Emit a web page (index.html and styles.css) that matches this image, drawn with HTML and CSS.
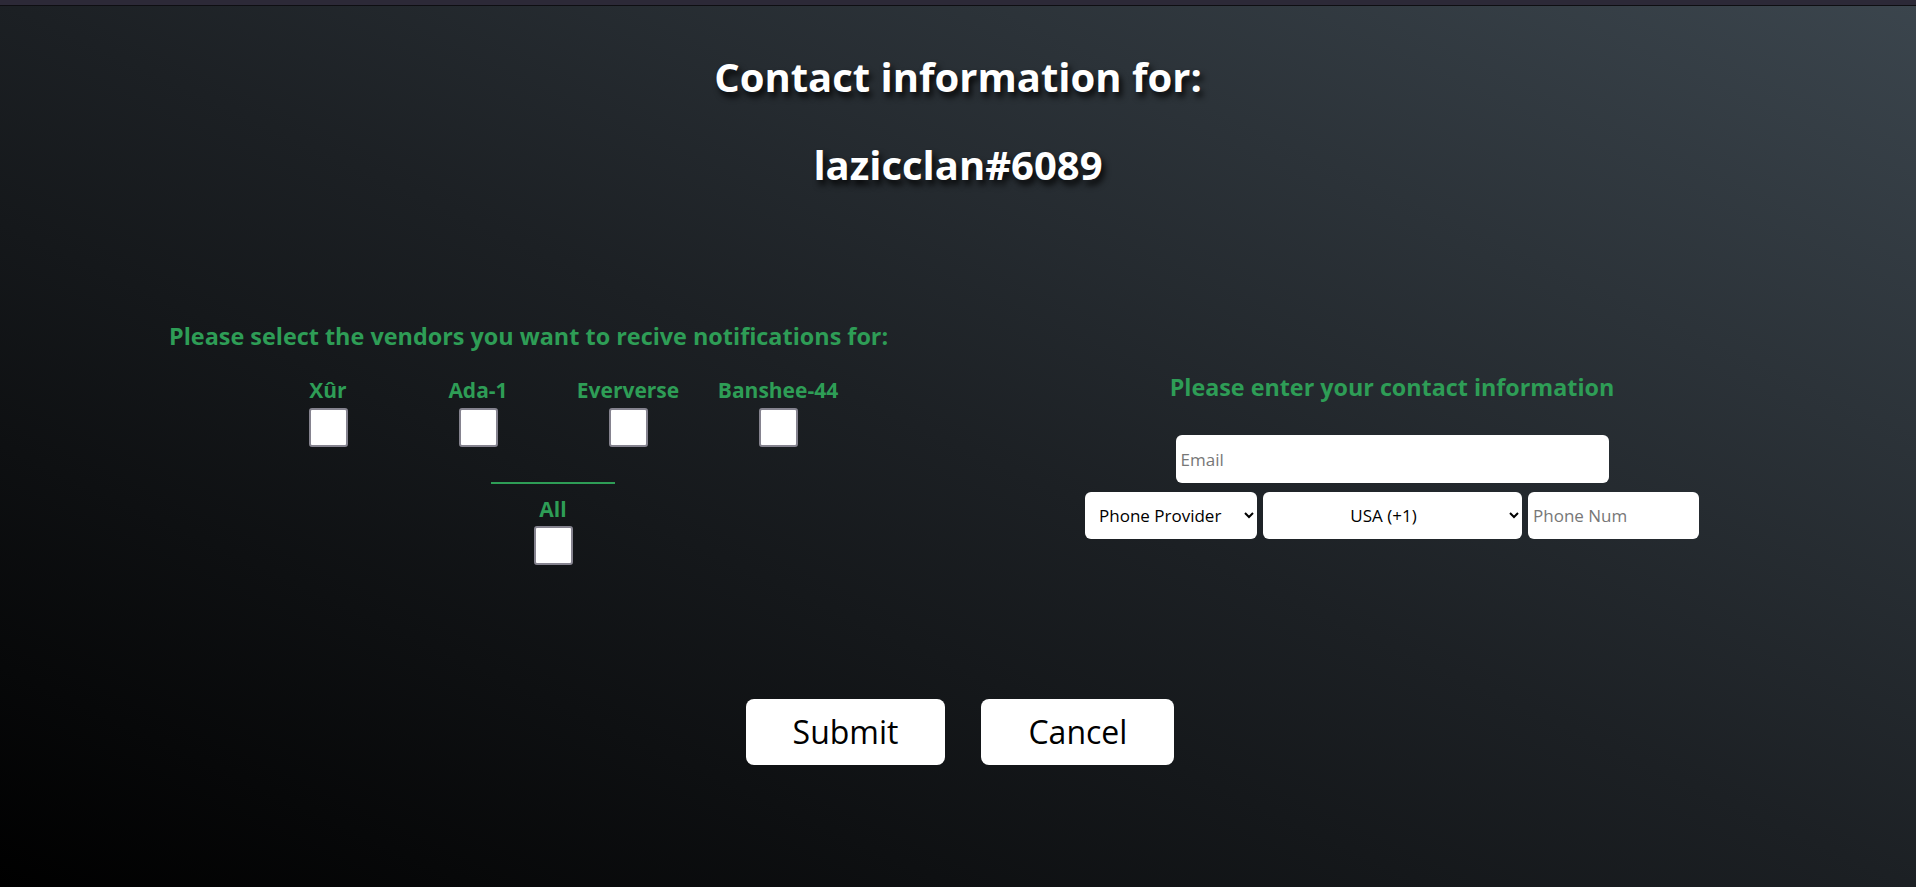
FILE: index.html
```html
<!DOCTYPE html>
<html>
<head>
<meta charset="utf-8">
<title>Contact information</title>
<link rel="stylesheet" href="styles.css">
</head>
<body>
<div class="topbar"></div>
<main class="page">
  <h1 class="title">Contact information for:</h1>
  <h2 class="title user">lazicclan#6089</h2>
  <section class="content">
    <div class="vendors-col">
      <p class="label">Please select the vendors you want to recive notifications for:</p>
      <div class="vendors">
        <label class="vendor"><span>Xûr</span><input type="checkbox" class="box"></label>
        <label class="vendor"><span>Ada-1</span><input type="checkbox" class="box"></label>
        <label class="vendor"><span>Eververse</span><input type="checkbox" class="box"></label>
        <label class="vendor"><span>Banshee-44</span><input type="checkbox" class="box"></label>
      </div>
      <div class="all-wrap">
        <div class="divider"></div>
        <label class="vendor all"><span>All</span><input type="checkbox" class="box"></label>
      </div>
    </div>
    <div class="contact-col">
      <p class="label contact-label">Please enter your contact information</p>
      <input class="field email" type="text" placeholder="Email">
      <div class="phone-row">
        <select class="field provider"><option>Phone Provider</option></select>
        <select class="field country"><option>USA (+1)</option></select>
        <input class="field phone" type="text" placeholder="Phone Num">
      </div>
    </div>
  </section>
  <div class="actions">
    <button class="btn submit">Submit</button>
    <button class="btn cancel">Cancel</button>
  </div>
</main>
</body>
</html>
```

FILE: styles.css
```css
html, body {
  margin: 0;
  padding: 0;
  height: 100%;
}
body {
  font-family: "Open Sans", "Liberation Sans", sans-serif;
  background: linear-gradient(to top right, #000000 0%, #1c2024 50%, #3b454d 100%);
  overflow: hidden;
}
.topbar {
  height: 5px;
  background: #2c2937;
  border-bottom: 1px solid #0e0e12;
}
.page {
  display: flex;
  flex-direction: column;
}
.title {
  margin: 0;
  text-align: center;
  color: #ffffff;
  font-weight: 700;
  font-size: 40px;
  line-height: 54px;
  text-shadow: 3px 5px 6px rgba(0, 0, 0, 0.85);
}
h1.title {
  margin-top: 44px;
}
.user {
  margin-top: 34px;
}
.content {
  display: flex;
  margin-top: 128px;
}
.vendors-col {
  width: 719px;
  padding-left: 169px;
  flex: none;
}
.label {
  margin: 0;
  color: #2e9d56;
  font-weight: 700;
  font-size: 23.4px;
  line-height: 32px;
  white-space: nowrap;
}
.vendors {
  display: grid;
  grid-template-columns: repeat(4, 150px);
  margin-left: 84px;
  margin-top: 25px;
}
.vendor {
  display: flex;
  flex-direction: column;
  align-items: center;
  color: #2e9d56;
  font-weight: 700;
  font-size: 21px;
  line-height: 27px;
}
.box {
  appearance: none;
  -webkit-appearance: none;
  margin: 4px 0 0;
  width: 39px;
  height: 39px;
  background: #ffffff;
  border: 2px solid #85838f;
  border-radius: 3px;
  box-sizing: border-box;
}
.all .box {
  margin-top: 3px;
}
.all-wrap {
  width: 600px;
  margin-left: 84px;
  display: flex;
  flex-direction: column;
  align-items: center;
}
.divider {
  width: 124px;
  height: 2px;
  background: #2e9d56;
  margin-top: 35px;
  margin-bottom: 12px;
}
.contact-col {
  flex: 1;
  display: flex;
  flex-direction: column;
  align-items: center;
  padding-right: 20px;
  padding-top: 51px;
}
.contact-label {
  font-size: 23.3px;
}
.field {
  border: none;
  border-radius: 6px;
  background: #ffffff;
  font-family: "Open Sans", "Liberation Sans", sans-serif;
  font-size: 17px;
  color: #000;
  box-sizing: border-box;
  outline: none;
}
.field::placeholder {
  color: #777777;
}
.email {
  margin-top: 32px;
  width: 433px;
  height: 48px;
  padding: 0 5px;
}
.phone-row {
  display: flex;
  gap: 6px;
  margin-top: 9px;
}
.phone-row .field {
  height: 47px;
}
.provider {
  width: 172px;
  padding: 0 8px 0 10px;
}
.country {
  width: 259px;
  text-align: center;
  text-align-last: center;
  padding: 0 14px 0 8px;
}
.phone {
  width: 171px;
  padding: 0 5px;
}
.actions {
  display: flex;
  justify-content: center;
  gap: 36px;
  margin-top: 134px;
  padding-left: 4px;
}
.btn {
  height: 66px;
  padding: 0 47px;
  border: none;
  border-radius: 8px;
  background: #ffffff;
  color: #000;
  font-family: "Open Sans", "Liberation Sans", sans-serif;
  font-size: 32px;
  line-height: 1;
}
```
